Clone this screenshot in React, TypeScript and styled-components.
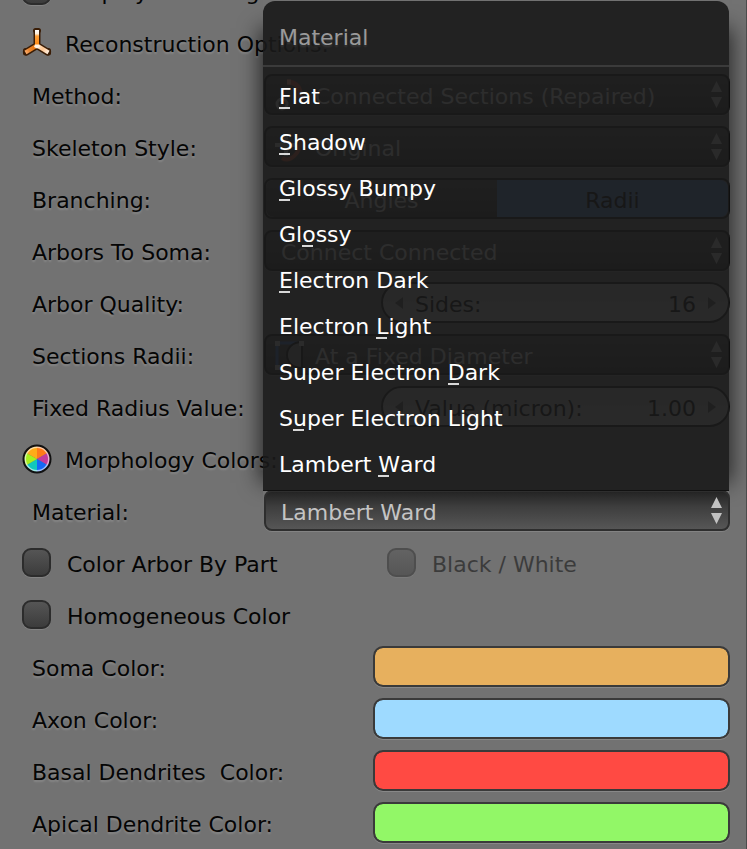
import React, { useState } from "react";
import styled, { createGlobalStyle, css } from "styled-components";

const GlobalStyle = createGlobalStyle`
  *, *::before, *::after { box-sizing: border-box; }
  html, body { margin: 0; background: #727272; }
  body { overflow: hidden; }
  body, input, select, button {
    font-family: "DejaVu Sans", sans-serif;
    font-size: 22px;
    line-height: 26px;
  }
`;

const Viewport = styled.main`
  height: 100vh;
  overflow: hidden;
  background: #727272;
  border-right: 1px solid #4c4c4c;
`;

const Panel = styled.form`
  margin-top: -35px;
  padding: 0 16px 0 22px;
`;

const Row = styled.div<{ $label?: number }>`
  display: grid;
  grid-template-columns: ${(p) => (p.$label ? `${p.$label}px minmax(0, 1fr)` : "1fr")};
  align-items: center;
  height: 52px;
  padding: 5px 0 6px;
`;

const caption = css`
  padding-top: 5px;
  color: #050505;
  white-space: pre;
`;

const FieldLabel = styled.label`
  ${caption}
  padding-left: 10px;
  text-shadow: 0 2px 2px rgba(255, 255, 255, 0.16);
`;

const Heading = styled.h2`
  display: flex;
  align-items: center;
  gap: 13px;
  margin: 0;
  font-size: 22px;
  font-weight: normal;
`;

const HeadingText = styled.span`
  ${caption}
  text-shadow: 0 2px 2px rgba(255, 255, 255, 0.16);
`;

const Tick = styled.label<{ $dim?: boolean }>`
  display: flex;
  align-items: center;
  gap: 16px;
  opacity: ${(p) => (p.$dim ? 0.5 : 1)};
`;

const TickText = styled.span`
  ${caption}
`;

const TickBox = styled.input`
  appearance: none;
  width: 29px;
  height: 29px;
  margin: 0;
  border: 2px solid #2c2c2c;
  border-radius: 9px;
  background: linear-gradient(#555, #3c3c3c);
  box-shadow: 0 1px 0 rgba(255, 255, 255, 0.12);
  &:checked { background: #5680c2; }
`;

const SelectBox = styled.div`
  position: relative;
  height: 41px;
`;

const Select = styled.select<{ $open?: boolean; $icon?: boolean }>`
  appearance: none;
  width: 100%;
  height: 41px;
  padding: 5px 34px 0 ${(p) => (p.$icon ? 49 : 15)}px;
  border: 2px solid ${(p) => (p.$open ? "#2e2e2e" : "#191919")};
  border-radius: 8px;
  background: ${(p) =>
    p.$open ? "linear-gradient(#242424, #3e3e3e 40%, #565656)" : "linear-gradient(#555, #373737)"};
  color: ${(p) => (p.$open ? "#c4c4c4" : "#dcdcdc")};
  box-shadow: 0 1px 0 rgba(255, 255, 255, 0.12);
  outline: none;
`;

const Arrows = styled.svg`
  position: absolute;
  top: 6px;
  right: 7px;
  pointer-events: none;
`;

const SelectIcon = styled.svg`
  position: absolute;
  top: 5px;
  left: 9px;
  pointer-events: none;
`;

const Segments = styled.fieldset`
  display: grid;
  grid-template-columns: 1fr 1fr;
  height: 41px;
  margin: 0;
  padding: 0;
  border: 2px solid #191919;
  border-radius: 8px;
  overflow: hidden;
`;

const Segment = styled.label`
  padding-top: 8px;
  text-align: center;
  color: #dcdcdc;
  background: linear-gradient(#555, #373737);
  &:has(input:checked) {
    color: #000;
    background: #5680c2;
  }
`;

const SegmentRadio = styled.input`
  appearance: none;
  width: 0;
  height: 0;
  margin: 0;
`;

const NumberBox = styled.div`
  display: flex;
  align-items: center;
  min-width: 0;
  height: 41px;
  border: 2px solid #191919;
  border-radius: 21px;
  background: linear-gradient(#a8a8a8, #bcbcbc);
`;

const StepButton = styled.button`
  display: flex;
  flex: none;
  justify-content: center;
  width: 32px;
  padding: 0;
  border: 0;
  background: none;
`;

const NumberLabel = styled.label`
  flex: none;
  padding-top: 5px;
  color: #000;
`;

const NumberInput = styled.input`
  flex: 1;
  width: 0;
  min-width: 0;
  padding: 5px 0 0;
  border: 0;
  background: none;
  text-align: right;
  color: #000;
  outline: none;
`;

const Swatch = styled.input`
  appearance: none;
  display: block;
  width: 100%;
  height: 41px;
  padding: 0;
  border: 2px solid #3a3a3a;
  border-radius: 10px;
  background: #3a3a3a;
  box-shadow: 0 1px 0 rgba(255, 255, 255, 0.16);
  overflow: hidden;
  &::-webkit-color-swatch-wrapper { padding: 0; }
  &::-webkit-color-swatch { border: 0; border-radius: 8px; }
`;

const Menu = styled.div`
  position: absolute;
  z-index: 2;
  bottom: 40px;
  left: -1px;
  right: 1px;
  padding-bottom: 3px;
  border-bottom: 1px solid #111;
  border-radius: 12px 12px 0 0;
  background: rgba(25, 25, 25, 0.9);

  /* Soft shadow along the left and right sides only. */
  &::before {
    content: "";
    position: absolute;
    inset: 30px 0 10px;
    pointer-events: none;
    box-shadow: 0 0 20px 3px rgba(0, 0, 0, 0.65);
    clip-path: polygon(
      -40px -40px, 0 -40px, 0 0, 100% 0, 100% -40px, calc(100% + 40px) -40px,
      calc(100% + 40px) calc(100% + 40px), 100% calc(100% + 40px), 100% 0,
      0 0, 0 calc(100% + 40px), -40px calc(100% + 40px)
    );
  }
`;

const MenuTitle = styled.div`
  height: 66px;
  padding: 24px 16px 0;
  border-bottom: 2px solid #3b3b3b;
  margin-bottom: 6px;
  color: #9a9a9a;
  text-shadow: 0 2px 2px rgba(255, 255, 255, 0.1);
`;

const MenuItem = styled.button`
  display: block;
  width: 100%;
  height: 46px;
  padding: 2px 16px 0;
  border: 0;
  background: none;
  color: #fff;
  text-align: left;
  &:hover { background: rgba(86, 128, 194, 0.5); }
`;

const Hotkey = styled.span`
  position: relative;
  &::after {
    content: "";
    position: absolute;
    left: 0;
    bottom: 0;
    width: 11px;
    height: 2px;
    background: #d8d8d8;
  }
`;

const DoubleArrow = () => (
  <Arrows width="13" height="28" viewBox="0 0 13 28" fill="#c2c2c2" aria-hidden="true">
    <path d="M6.5 1 12 12H1ZM1 17h11L6.5 28Z" />
  </Arrows>
);

const StepArrow = ({ back }: { back?: boolean }) => (
  <svg width="10" height="14" viewBox="0 0 10 14" fill="#555" aria-hidden="true">
    <path d={back ? "M9 1v12L1 7Z" : "M1 1v12l8-6Z"} />
  </svg>
);

const ArmatureIcon = () => (
  <svg width="30" height="30" viewBox="0 0 30 30" aria-hidden="true">
    <defs>
      <linearGradient id="arm-up" gradientUnits="userSpaceOnUse" x1="0" y1="2" x2="0" y2="17">
        <stop offset="0" stopColor="#fff" />
        <stop offset=".25" stopColor="#fff0dc" />
        <stop offset=".4" stopColor="#ffa13a" />
        <stop offset="1" stopColor="#ff8a14" />
      </linearGradient>
      <linearGradient id="arm-left" gradientUnits="userSpaceOnUse" x1="3" y1="24" x2="14" y2="17">
        <stop offset="0" stopColor="#ffb070" />
        <stop offset=".35" stopColor="#e8842e" />
        <stop offset="1" stopColor="#ea7204" />
      </linearGradient>
      <linearGradient id="arm-right" gradientUnits="userSpaceOnUse" x1="15" y1="17" x2="27" y2="24">
        <stop offset="0" stopColor="#ffe9cf" />
        <stop offset=".5" stopColor="#ffc690" />
        <stop offset="1" stopColor="#fff2e4" />
      </linearGradient>
    </defs>
    <g fill="none" stroke="#3a1d06" strokeWidth="7" strokeLinecap="round" strokeLinejoin="round">
      <path d="M15 4V17.500M15 17.500 4.500 24M15 17.500 25.500 24" />
      <path d="M13.500 2.500h3M3.500 22.500v2.500M26.500 22.500v2.500" strokeWidth="5" />
    </g>
    <g fill="none" strokeWidth="4">
      <path d="M15 17.500 3.500 24.500" stroke="url(#arm-left)" />
      <path d="M15 17.500 26.500 24.500" stroke="url(#arm-right)" />
      <path d="M15 2V19" stroke="url(#arm-up)" />
    </g>
    <path d="M13 16.500h4L18 19l-3 1.500L12 19Z" fill="#fff3e2" />
  </svg>
);

const wedges = [
  ["#ff7a1a", "M15 15V2A13 13 0 0 1 26.300 8.500Z"],
  ["#c33a9c", "M15 15 26.300 8.500A13 13 0 0 1 26.300 21.500Z"],
  ["#1668f5", "M15 15 26.300 21.500A13 13 0 0 1 15 28Z"],
  ["#10c8bd", "M15 15V28A13 13 0 0 1 3.700 21.500Z"],
  ["#a6f01e", "M15 15 3.700 21.500A13 13 0 0 1 3.700 8.500Z"],
  ["#ffac18", "M15 15 3.700 8.500A13 13 0 0 1 15 2Z"],
];

const ColorWheelIcon = () => (
  <svg width="30" height="30" viewBox="0 0 30 30" aria-hidden="true">
    {wedges.map(([fill, d]) => (
      <path key={fill} fill={fill} d={d} />
    ))}
    <circle cx="15" cy="15" r="12" fill="none" stroke="#fff" strokeWidth="2" opacity=".6" />
    <circle cx="15" cy="15" r="13.500" fill="none" stroke="#111" strokeWidth="2" />
  </svg>
);

const icons = {
  connected: (
    <SelectIcon width="32" height="32" viewBox="0 0 32 32" fill="none" aria-hidden="true">
      <path d="M14 3C24 3 28 9 27 19" stroke="#e2593c" strokeWidth="5" />
      <path d="M14 3h4" stroke="#ffb09a" strokeWidth="5" />
      <circle cx="9" cy="25" r="5" stroke="#c8c8c8" strokeWidth="3" />
    </SelectIcon>
  ),
  original: (
    <SelectIcon width="32" height="32" viewBox="0 0 32 32" fill="none" aria-hidden="true">
      <path d="M2 14h22M13 3v22" stroke="#ccc" strokeWidth="4" />
      <circle cx="13" cy="14" r="6" fill="#999" />
      <path d="M9 27c8 5 18-4 19-18" stroke="#d05a3c" strokeWidth="4" />
    </SelectIcon>
  ),
  fixed: (
    <SelectIcon width="32" height="32" viewBox="0 0 32 32" fill="none" aria-hidden="true">
      <path d="M4 4v24M4 4h22" stroke="#3d6ec4" strokeWidth="3" />
      <path d="M29 3C9 3 9 29 29 29Z" fill="#888" stroke="#111" strokeWidth="2" />
      <path d="M2 2h5v5H2ZM2 26h5v5H2ZM26 2h5v5h-5Z" fill="#ccc" />
    </SelectIcon>
  ),
};

interface DropProps {
  id: string;
  label: string;
  value: string;
  icon?: keyof typeof icons;
}

const DropRow = ({ id, label, value, icon }: DropProps) => (
  <Row $label={242}>
    <FieldLabel htmlFor={id}>{label}</FieldLabel>
    <SelectBox>
      <Select id={id} $icon={!!icon} defaultValue={value}>
        <option>{value}</option>
      </Select>
      {icon && icons[icon]}
      <DoubleArrow />
    </SelectBox>
  </Row>
);

interface NumberProps {
  id: string;
  label: string;
  name: string;
  value: string;
}

const NumberRow = ({ id, label, name, value }: NumberProps) => (
  <Row $label={359}>
    <FieldLabel as="span">{label}</FieldLabel>
    <NumberBox>
      <StepButton type="button" aria-label={`Decrease ${name}`}>
        <StepArrow back />
      </StepButton>
      <NumberLabel htmlFor={id}>{name}</NumberLabel>
      <NumberInput id={id} defaultValue={value} />
      <StepButton type="button" aria-label={`Increase ${name}`}>
        <StepArrow />
      </StepButton>
    </NumberBox>
  </Row>
);

const TickField = ({ text, disabled }: { text: string; disabled?: boolean }) => (
  <Tick $dim={disabled}>
    <TickBox type="checkbox" disabled={disabled} />
    <TickText>{text}</TickText>
  </Tick>
);

const materials: [string, number][] = [
  ["Flat", 0],
  ["Shadow", 0],
  ["Glossy Bumpy", 0],
  ["Glossy", 2],
  ["Electron Dark", 0],
  ["Electron Light", 9],
  ["Super Electron Dark", 15],
  ["Super Electron Light", 1],
  ["Lambert Ward", 8],
];

const swatches = [
  ["soma", "Soma Color:", "#e7b05e"],
  ["axon", "Axon Color:", "#9edaff"],
  ["basal", "Basal Dendrites  Color:", "#ff4a43"],
  ["apical", "Apical Dendrite Color:", "#92f767"],
];

export default function App() {
  const [material, setMaterial] = useState("Lambert Ward");

  return (
    <Viewport>
      <GlobalStyle />
      <Panel>
        <Row>
          <TickField text="Display Bounding Box Info" />
        </Row>
        <Row>
          <Heading>
            <ArmatureIcon />
            <HeadingText>Reconstruction Options:</HeadingText>
          </Heading>
        </Row>
        <DropRow id="method" label="Method:" value="Connected Sections (Repaired)" icon="connected" />
        <DropRow id="style" label="Skeleton Style:" value="Original" icon="original" />
        <Row $label={242}>
          <FieldLabel as="span">Branching:</FieldLabel>
          <Segments aria-label="Branching">
            <Segment>
              <SegmentRadio type="radio" name="branching" />
              Angles
            </Segment>
            <Segment>
              <SegmentRadio type="radio" name="branching" defaultChecked />
              Radii
            </Segment>
          </Segments>
        </Row>
        <DropRow id="arbors" label="Arbors To Soma:" value="Connect Connected" />
        <NumberRow id="sides" label="Arbor Quality:" name="Sides:" value="16" />
        <DropRow id="radii" label="Sections Radii:" value="At a Fixed Diameter" icon="fixed" />
        <NumberRow id="radius" label="Fixed Radius Value:" name="Value (micron):" value="1.00" />
        <Row>
          <Heading>
            <ColorWheelIcon />
            <HeadingText>Morphology Colors:</HeadingText>
          </Heading>
        </Row>
        <Row $label={242}>
          <FieldLabel htmlFor="material">Material:</FieldLabel>
          <SelectBox>
            <Select
              id="material"
              $open
              value={material}
              onChange={(e) => setMaterial(e.target.value)}
            >
              {materials.map(([name]) => (
                <option key={name}>{name}</option>
              ))}
            </Select>
            <DoubleArrow />
            <Menu role="menu" aria-label="Material">
              <MenuTitle>Material</MenuTitle>
              {materials.map(([name, key]) => (
                <MenuItem key={name} type="button" role="menuitem" onClick={() => setMaterial(name)}>
                  {name.slice(0, key)}
                  <Hotkey>{name[key]}</Hotkey>
                  {name.slice(key + 1)}
                </MenuItem>
              ))}
            </Menu>
          </SelectBox>
        </Row>
        <Row $label={365}>
          <TickField text="Color Arbor By Part" />
          <TickField text="Black / White" disabled />
        </Row>
        <Row>
          <TickField text="Homogeneous Color" />
        </Row>
        {swatches.map(([id, label, color]) => (
          <Row key={id} $label={351}>
            <FieldLabel htmlFor={id}>{label}</FieldLabel>
            <Swatch id={id} type="color" defaultValue={color} />
          </Row>
        ))}
      </Panel>
    </Viewport>
  );
}
